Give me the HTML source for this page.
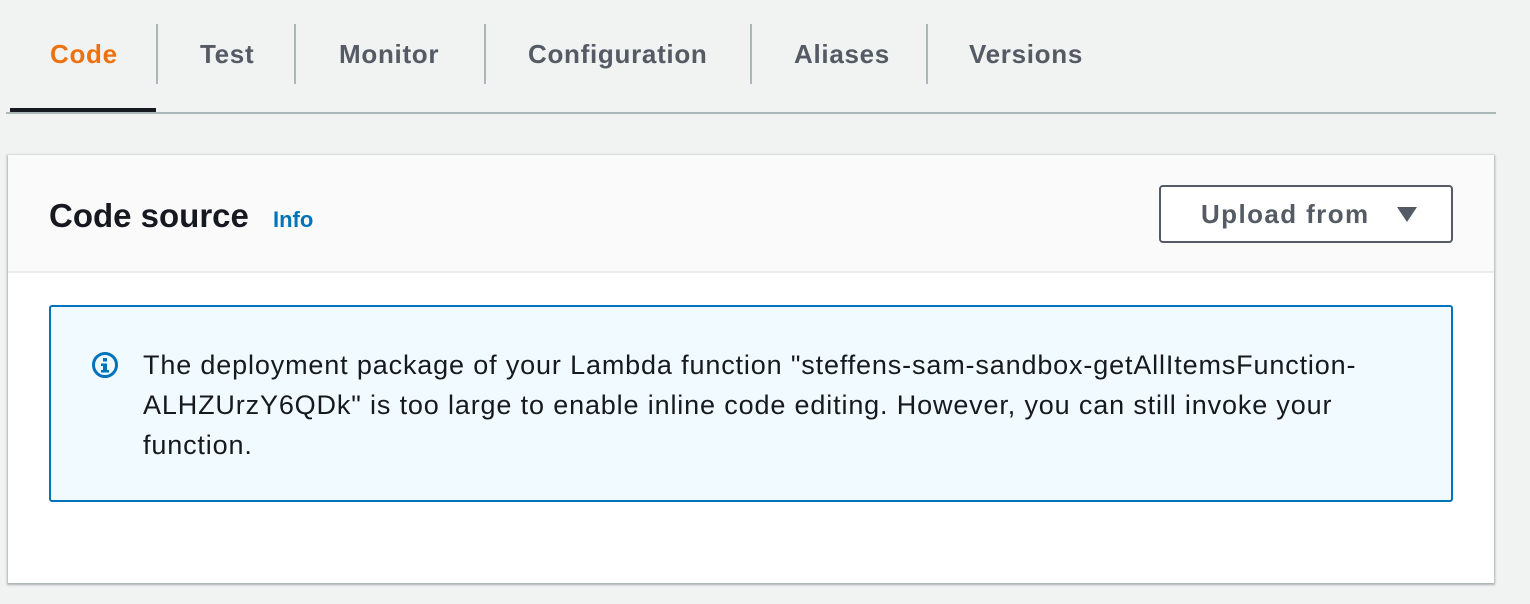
<!DOCTYPE html>
<html><head><style>
body{margin:0;width:1530px;height:604px;background:#f1f2f2;font-family:"Liberation Sans",sans-serif;position:relative;overflow:hidden}
.tab{position:absolute;top:36px;font-size:26px;font-weight:bold;color:#545b64;line-height:36px;letter-spacing:0.7px}
.sep{position:absolute;top:24px;width:2px;height:60px;background:#aab7b8}
.card{position:absolute;left:8px;top:155px;width:1486px;height:428px;background:#fff;box-shadow:0 1px 2px 1px rgba(0,28,36,.3)}
.hdr{position:absolute;left:0;top:0;width:100%;height:116px;background:#fafafa;border-bottom:2px solid #eaeded}
</style></head><body>
<div class="tab" style="left:50px;color:#ec7211">Code</div>
<div class="sep" style="left:156px"></div>
<div class="tab" style="left:200px">Test</div>
<div class="sep" style="left:294px"></div>
<div class="tab" style="left:339px">Monitor</div>
<div class="sep" style="left:484px"></div>
<div class="tab" style="left:528px">Configuration</div>
<div class="sep" style="left:750px"></div>
<div class="tab" style="left:794px">Aliases</div>
<div class="sep" style="left:926px"></div>
<div class="tab" style="left:969px">Versions</div>
<div style="position:absolute;left:6px;top:112px;width:1490px;height:2px;background:#aab7b8"></div>
<div style="position:absolute;left:10px;top:108px;width:146px;height:4px;background:#16191f"></div>
<div class="card">
<div class="hdr"></div>
<div style="position:absolute;left:41px;top:40px;font-size:33px;font-weight:bold;color:#16191f;line-height:42px">Code source</div>
<div style="position:absolute;left:265px;top:51px;font-size:22px;font-weight:bold;color:#0073bb;line-height:28px">Info</div>
<div style="position:absolute;left:1151px;top:30px;width:290px;height:54px;border:2px solid #545b64;border-radius:4px;background:#fff;box-sizing:content-box">
<span style="position:absolute;left:40px;top:12px;font-size:26px;font-weight:bold;color:#545b64;line-height:30px;letter-spacing:1.4px">Upload from</span>
<svg style="position:absolute;left:236px;top:20px" width="20" height="16"><path d="M0 0H20L10 15Z" fill="#545b64"/></svg>
</div>
<div style="position:absolute;left:41px;top:150px;width:1400px;height:193px;border:2px solid #0073bb;border-radius:3px;background:#f1faff">
<svg style="position:absolute;left:40px;top:44px" width="28" height="28" viewBox="0 0 28 28"><circle cx="14" cy="14" r="11.5" fill="none" stroke="#0073bb" stroke-width="3"/><rect x="12" y="7" width="4" height="3.5" fill="#0073bb"/><path d="M10 12.5H16V19H18V21.5H10V19H12V15H10Z" fill="#0073bb"/></svg>
<div style="position:absolute;left:92px;top:38px;width:1300px;font-size:27px;line-height:40px;color:#16191f;letter-spacing:0.85px;white-space:nowrap">The deployment package of your Lambda function "steffens-sam-sandbox-getAllItemsFunction-<br>ALHZUrzY6QDk" is too large to enable inline code editing. However, you can still invoke your<br>function.</div>
</div>
</div>
</body></html>
